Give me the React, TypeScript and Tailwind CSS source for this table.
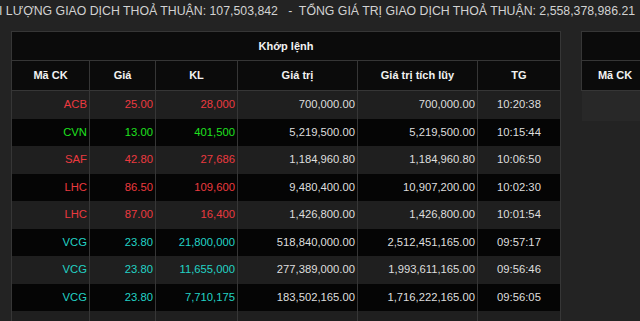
import React from "react";

type Row = {
	ck: string;
	gia: string;
	kl: string;
	gt: string;
	tl: string;
	tg: string;
	tone: "red" | "green" | "cyan";
};

const rows: Row[] = [
	{ ck: "ACB", gia: "25.00", kl: "28,000", gt: "700,000.00", tl: "700,000.00", tg: "10:20:38", tone: "red" },
	{ ck: "CVN", gia: "13.00", kl: "401,500", gt: "5,219,500.00", tl: "5,219,500.00", tg: "10:15:44", tone: "green" },
	{ ck: "SAF", gia: "42.80", kl: "27,686", gt: "1,184,960.80", tl: "1,184,960.80", tg: "10:06:50", tone: "red" },
	{ ck: "LHC", gia: "86.50", kl: "109,600", gt: "9,480,400.00", tl: "10,907,200.00", tg: "10:02:30", tone: "red" },
	{ ck: "LHC", gia: "87.00", kl: "16,400", gt: "1,426,800.00", tl: "1,426,800.00", tg: "10:01:54", tone: "red" },
	{ ck: "VCG", gia: "23.80", kl: "21,800,000", gt: "518,840,000.00", tl: "2,512,451,165.00", tg: "09:57:17", tone: "cyan" },
	{ ck: "VCG", gia: "23.80", kl: "11,655,000", gt: "277,389,000.00", tl: "1,993,611,165.00", tg: "09:56:46", tone: "cyan" },
	{ ck: "VCG", gia: "23.80", kl: "7,710,175", gt: "183,502,165.00", tl: "1,716,222,165.00", tg: "09:56:05", tone: "cyan" },
];

const toneClass = {
	red: "text-[#ec3a3f]",
	green: "text-[#1fe21f]",
	cyan: "text-[#22d3c5]",
};

const th = "border border-[#363636] text-center font-bold text-[11px] text-[#f2f2f2]";
const td = "border-x border-[#363636] text-right pr-[2px]";

function App() {
	return (
		<div
			className="w-[640px] h-[321px] overflow-hidden bg-[#232323]"
			style={{ fontFamily: '"Liberation Sans", Arial, sans-serif' }}
		>
			<div className="pt-[3px] -ml-[1px] text-[12.3px] leading-[16px] text-[#d2d2d2] whitespace-pre">
				I LƯỢNG GIAO DỊCH THOẢ THUẬN: 107,503,842   -  TỔNG GIÁ TRỊ GIAO DỊCH THOẢ THUẬN: 2,558,378,986.21
			</div>
			<div className="flex items-start gap-[20px] mt-[12px] pl-[11px]">
				<table className="table-fixed border-collapse w-[549px] shrink-0">
					<colgroup>
						<col className="w-[78px]" />
						<col className="w-[66px]" />
						<col className="w-[82px]" />
						<col className="w-[120px]" />
						<col className="w-[120px]" />
						<col className="w-[83px]" />
					</colgroup>
					<thead className="bg-[#0b0b0b]">
						<tr className="h-[29px]">
							<th colSpan={6} className={th}>
								Khớp lệnh
							</th>
						</tr>
						<tr className="h-[30px]">
							<th className={th}>Mã CK</th>
							<th className={th}>Giá</th>
							<th className={th}>KL</th>
							<th className={th}>Giá trị</th>
							<th className={th}>Giá trị tích lũy</th>
							<th className={th}>TG</th>
						</tr>
					</thead>
					<tbody className="text-[11.25px]">
						{rows.map((r, i) => (
							<tr
								key={i}
								className={
									i % 2 === 0
										? "h-[28px] bg-[#1f1f1f]"
										: "h-[27px] bg-[#050505]"
								}
							>
								<td className={`${td} ${toneClass[r.tone]}`}>{r.ck}</td>
								<td className={`${td} ${toneClass[r.tone]}`}>{r.gia}</td>
								<td className={`${td} ${toneClass[r.tone]}`}>{r.kl}</td>
								<td className={`${td} text-[#dedede]`}>{r.gt}</td>
								<td className={`${td} text-[#dedede]`}>{r.tl}</td>
								<td className="border-x border-[#363636] text-center text-[#dedede]">
									{r.tg}
								</td>
							</tr>
						))}
						<tr className="h-[28px] bg-[#1f1f1f]">
							<td className={td}></td>
							<td className={td}></td>
							<td className={td}></td>
							<td className={td}></td>
							<td className={td}></td>
							<td className={td}></td>
						</tr>
					</tbody>
				</table>
				<table className="table-fixed border-collapse w-[300px] shrink-0">
					<colgroup>
						<col className="w-[67px]" />
						<col className="w-[233px]" />
					</colgroup>
					<thead className="bg-[#0b0b0b]">
						<tr className="h-[29px]">
							<th colSpan={2} className={th}></th>
						</tr>
						<tr className="h-[30px]">
							<th className={th}>Mã CK</th>
							<th className={th}></th>
						</tr>
					</thead>
					<tbody>
						<tr className="h-[30px] bg-[#282828]">
							<td colSpan={2}></td>
						</tr>
					</tbody>
				</table>
			</div>
		</div>
	);
}

export default App;
